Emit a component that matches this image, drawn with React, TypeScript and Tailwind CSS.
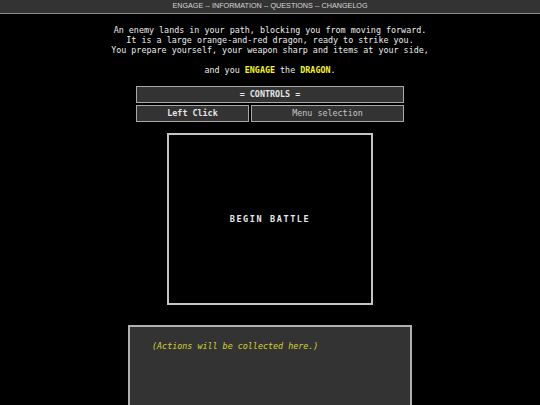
export default function App() {
  const mono = { fontFamily: '"DejaVu Sans Mono", "Liberation Mono", monospace' };
  return (
    <div className="min-h-[405px] w-[540px] bg-black overflow-hidden" style={mono}>
      <div
        className="h-[14px] bg-[#333333] border-b border-[#8a8a8a] flex items-center justify-center text-[7.2px] text-[#d8d8d8]"
        style={{ fontFamily: '"Liberation Sans", Arial, sans-serif' }}
      >
        ENGAGE -- INFORMATION -- QUESTIONS -- CHANGELOG
      </div>
      <div className="mt-[11px] flex flex-col items-center text-[8.4px] leading-[10px] text-[#ececec] whitespace-pre">
        <div>An enemy lands in your path, blocking you from moving forward.</div>
        <div>It is a large orange-and-red dragon, ready to strike you.</div>
        <div>You prepare yourself, your weapon sharp and items at your side,</div>
        <div>&nbsp;</div>
        <div>
          and you <span className="font-bold text-[#f2f230]">ENGAGE</span> the{" "}
          <span className="font-bold text-[#f2f230]">DRAGON</span>.
        </div>
      </div>
      <div className="mt-[11px] mx-auto w-[268px] flex flex-col gap-[2px] text-[8.4px]">
        <div className="h-[17px] bg-[#333333] border border-[#a8a8a8] flex items-center justify-center font-bold text-[#e6e6e6]">
          = CONTROLS =
        </div>
        <div className="flex gap-[2px]">
          <div className="h-[17px] w-[113px] bg-[#333333] border border-[#a8a8a8] flex items-center justify-center font-bold text-[#e6e6e6]">
            Left Click
          </div>
          <div className="h-[17px] flex-1 bg-[#333333] border border-[#a8a8a8] flex items-center justify-center text-[#c8c8c8]">
            Menu selection
          </div>
        </div>
      </div>
      <div className="mt-[11px] mx-auto w-[206px] h-[172px] border-2 border-[#c4c4c4] flex items-center justify-center">
        <span className="font-bold text-[8.5px] tracking-[1.6px] text-[#e8e8e8]">BEGIN BATTLE</span>
      </div>
      <div className="mt-[20px] mx-auto w-[284px] h-[100px] bg-[#333333] border-2 border-[#b0b0b0] pt-[5px] pl-[22px]">
        <span className="italic text-[8.4px] text-[#d4d430]">(Actions will be collected here.)</span>
      </div>
    </div>
  );
}
